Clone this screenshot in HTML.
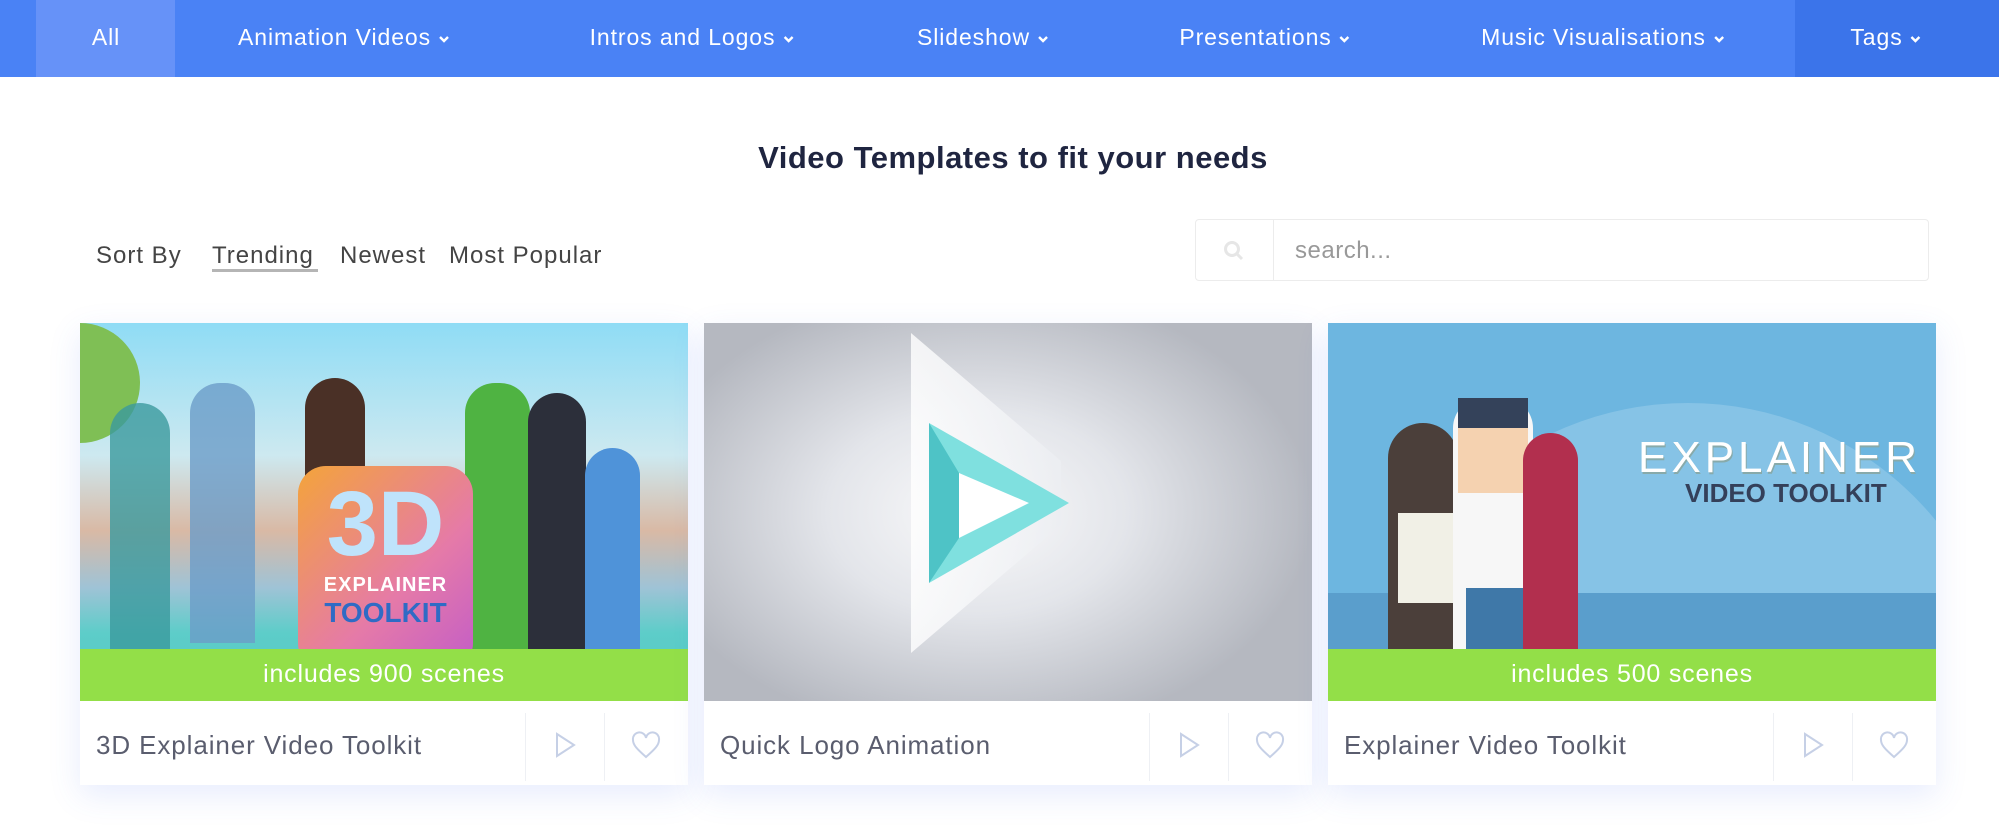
<!DOCTYPE html>
<html><head><meta charset="utf-8"><style>
*{margin:0;padding:0;box-sizing:border-box}
html,body{width:1999px;height:826px;overflow:hidden}
body{background:#fff;font-family:"Liberation Sans",sans-serif;position:relative}
.nav{position:absolute;left:0;top:0;width:1999px;height:77px;background:#4a82f5}
.nav .all{position:absolute;left:36px;top:0;width:139px;height:77px;background:#6692f8}
.nav .tags{position:absolute;left:1795px;top:0;width:204px;height:77px;background:#3b74ea}
.ni{position:absolute;top:0;height:77px;line-height:75px;color:#fff;font-size:23px;letter-spacing:.9px;transform:translateX(-50%);white-space:nowrap}
.ni svg{vertical-align:middle;margin-left:7px}
h1{position:absolute;left:27px;width:1972px;top:140px;text-align:center;font-size:31px;font-weight:bold;color:#1f2540;letter-spacing:.5px}
.sort{position:absolute;top:242px;font-size:24px;color:#444;letter-spacing:1px}
.ul{position:absolute;left:212px;top:269px;width:106px;height:3px;background:#b5b5b5}
.search{position:absolute;left:1195px;top:219px;width:734px;height:62px;border:1px solid #ececec;border-radius:4px}
.search .div{position:absolute;left:77px;top:0;width:1px;height:60px;background:#ececec}
.search span{position:absolute;left:99px;top:17px;font-size:24px;color:#999;letter-spacing:.5px}
.card{position:absolute;top:323px;width:608px;height:462px;background:#fff;box-shadow:0 10px 30px rgba(70,110,240,0.13)}
.img{position:absolute;left:0;top:0;width:608px;height:378px;overflow:hidden}
.band{position:absolute;left:0;top:326px;width:608px;height:52px;background:#93df48;color:#fff;font-size:25px;letter-spacing:.8px;text-align:center;line-height:50px}
.ft{position:absolute;left:16px;top:407px;font-size:26px;color:#5a5d6e;letter-spacing:.9px}
.vd{position:absolute;top:390px;width:1px;height:68px;background:#eef0f4}
.ic{position:absolute;top:407px}
</style></head><body>
<div class="nav"><div class="all"></div><div class="tags"></div>
<div class="ni" style="left:106px">All</div>
<div class="ni" style="left:344px">Animation Videos<svg width="12" height="8" viewBox="0 0 12 8"><path d="M2 2l4 4 4-4" stroke="#fff" stroke-width="2.4" fill="none"/></svg></div>
<div class="ni" style="left:692px">Intros and Logos<svg width="12" height="8" viewBox="0 0 12 8"><path d="M2 2l4 4 4-4" stroke="#fff" stroke-width="2.4" fill="none"/></svg></div>
<div class="ni" style="left:983px">Slideshow<svg width="12" height="8" viewBox="0 0 12 8"><path d="M2 2l4 4 4-4" stroke="#fff" stroke-width="2.4" fill="none"/></svg></div>
<div class="ni" style="left:1265px">Presentations<svg width="12" height="8" viewBox="0 0 12 8"><path d="M2 2l4 4 4-4" stroke="#fff" stroke-width="2.4" fill="none"/></svg></div>
<div class="ni" style="left:1603px">Music Visualisations<svg width="12" height="8" viewBox="0 0 12 8"><path d="M2 2l4 4 4-4" stroke="#fff" stroke-width="2.4" fill="none"/></svg></div>
<div class="ni" style="left:1886px">Tags<svg width="12" height="8" viewBox="0 0 12 8"><path d="M2 2l4 4 4-4" stroke="#fff" stroke-width="2.4" fill="none"/></svg></div>
</div>
<h1>Video Templates to fit your needs</h1>
<div class="sort" style="left:96px">Sort By</div>
<div class="sort" style="left:212px">Trending</div>
<div class="sort" style="left:340px">Newest</div>
<div class="sort" style="left:449px">Most Popular</div>
<div class="ul"></div>
<div class="search"><svg style="position:absolute;left:27px;top:20px" width="22" height="22" viewBox="0 0 22 22"><circle cx="9" cy="9" r="6.5" stroke="#e6e6e6" stroke-width="3" fill="none"/><path d="M14 14l5 5" stroke="#e6e6e6" stroke-width="3"/></svg><div class="div"></div><span>search...</span></div>

<div class="card" style="left:80px">
<div class="img" style="background:linear-gradient(#8fdcf5 0%,#cde9f0 35%,#d9b9a5 55%,#9fc3d6 70%,#5dcdc9 82%,#55c8c3 100%)">
<div style="position:absolute;left:0;top:0;width:60px;height:120px;background:#7fbf55;border-radius:0 60px 60px 0"></div>
<div style="position:absolute;left:30px;top:80px;width:60px;height:250px;background:#3b9a9e;border-radius:30px 30px 0 0;opacity:.8"></div>
<div style="position:absolute;left:110px;top:60px;width:65px;height:260px;background:#6b9cc8;border-radius:30px 30px 0 0;opacity:.8"></div>
<div style="position:absolute;left:225px;top:55px;width:60px;height:120px;background:#4a3026;border-radius:30px 30px 0 0"></div>
<div style="position:absolute;left:385px;top:60px;width:65px;height:270px;background:#4fb342;border-radius:30px 30px 0 0"></div>
<div style="position:absolute;left:448px;top:70px;width:58px;height:270px;background:#2c2f3a;border-radius:30px 30px 0 0"></div>
<div style="position:absolute;left:505px;top:125px;width:55px;height:210px;background:#4f93d9;border-radius:28px 28px 0 0"></div>
<div style="position:absolute;left:218px;top:143px;width:175px;height:205px;border-radius:28px;background:linear-gradient(135deg,#f4a43a,#e57aa8 60%,#c25cc8);text-align:center">
<div style="font-size:92px;font-weight:bold;color:#bfe3fb;line-height:100px;margin-top:8px">3D</div>
<div style="font-size:20px;font-weight:bold;color:#fff;letter-spacing:1px">EXPLAINER</div>
<div style="font-size:28px;font-weight:bold;color:#2f6bc5">TOOLKIT</div></div>
</div>
<div class="band">includes 900 scenes</div>
<div class="ft">3D Explainer Video Toolkit</div>
<div class="vd" style="left:445px"></div><div class="vd" style="left:524px"></div>
<svg class="ic" style="left:474px" width="24" height="30" viewBox="0 0 24 30"><path d="M3 4l17 11-17 11z" stroke="#c6d0e6" stroke-width="2" fill="none"/></svg>
<svg class="ic" style="left:550px" width="32" height="30" viewBox="0 0 32 30"><path d="M16 27C7 19 3 15 3 10a6.5 6.5 0 0113-2 6.5 6.5 0 0113 2c0 5-4 9-13 17z" stroke="#c6d0e6" stroke-width="2" fill="none"/></svg>
</div>

<div class="card" style="left:704px">
<div class="img" style="background:radial-gradient(ellipse 55% 60% at 45% 50%,#fafafb 0%,#e3e5ea 45%,#b5b8c0 100%)">
<div style="position:absolute;left:207px;top:10px;width:150px;height:320px;background:linear-gradient(90deg,#fff,#eceef2);clip-path:polygon(0 0,100% 40%,100% 60%,0 100%);opacity:.8"></div>
<svg style="position:absolute;left:215px;top:90px" width="160" height="180" viewBox="0 0 160 180"><path d="M10 10L150 90 10 170z" fill="#7fe0df"/><path d="M40 60L110 90 40 125z" fill="#fff"/><path d="M10 10L40 60 40 125 10 170z" fill="#4ec3c6"/></svg>
</div>
<div class="ft">Quick Logo Animation</div>
<div class="vd" style="left:445px"></div><div class="vd" style="left:524px"></div>
<svg class="ic" style="left:474px" width="24" height="30" viewBox="0 0 24 30"><path d="M3 4l17 11-17 11z" stroke="#c6d0e6" stroke-width="2" fill="none"/></svg>
<svg class="ic" style="left:550px" width="32" height="30" viewBox="0 0 32 30"><path d="M16 27C7 19 3 15 3 10a6.5 6.5 0 0113-2 6.5 6.5 0 0113 2c0 5-4 9-13 17z" stroke="#c6d0e6" stroke-width="2" fill="none"/></svg>
</div>

<div class="card" style="left:1328px">
<div class="img" style="background:#6db6e0">
<div style="position:absolute;left:40px;top:80px;width:640px;height:640px;border-radius:50%;background:#86c3e6"></div>
<div style="position:absolute;left:0;top:270px;width:608px;height:60px;background:#5a9ecc"></div>
<div style="position:absolute;left:60px;top:100px;width:70px;height:230px;background:#4b3f3a;border-radius:35px 35px 0 0"></div>
<div style="position:absolute;left:70px;top:190px;width:55px;height:90px;background:#f1f0e6"></div>
<div style="position:absolute;left:125px;top:75px;width:80px;height:255px;background:#f7f7f7;border-radius:30px 30px 0 0"></div>
<div style="position:absolute;left:130px;top:75px;width:70px;height:95px;background:#f5d2b0;border-top:30px solid #34425a"></div>
<div style="position:absolute;left:138px;top:265px;width:60px;height:65px;background:#3f78a8"></div>
<div style="position:absolute;left:195px;top:110px;width:55px;height:220px;background:#b22f4e;border-radius:28px 28px 0 0"></div>
<div style="position:absolute;left:310px;top:110px;font-size:44px;color:#fff;letter-spacing:4px;text-shadow:1px 2px 0 #8aa">EXPLAINER</div>
<div style="position:absolute;left:357px;top:155px;font-size:26px;font-weight:bold;color:#34405a">VIDEO TOOLKIT</div>
</div>
<div class="band">includes 500 scenes</div>
<div class="ft">Explainer Video Toolkit</div>
<div class="vd" style="left:445px"></div><div class="vd" style="left:524px"></div>
<svg class="ic" style="left:474px" width="24" height="30" viewBox="0 0 24 30"><path d="M3 4l17 11-17 11z" stroke="#c6d0e6" stroke-width="2" fill="none"/></svg>
<svg class="ic" style="left:550px" width="32" height="30" viewBox="0 0 32 30"><path d="M16 27C7 19 3 15 3 10a6.5 6.5 0 0113-2 6.5 6.5 0 0113 2c0 5-4 9-13 17z" stroke="#c6d0e6" stroke-width="2" fill="none"/></svg>
</div>
</body></html>
